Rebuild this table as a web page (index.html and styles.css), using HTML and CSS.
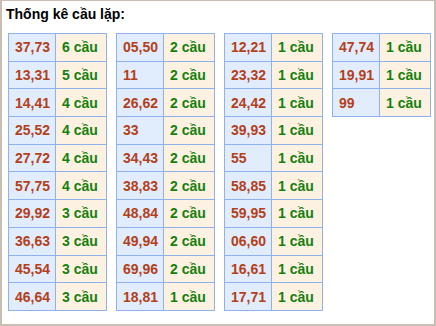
FILE: index.html
```html
<!DOCTYPE html>
<html>
<head>
<meta charset="utf-8">
<link rel="stylesheet" href="styles.css">
</head>
<body>
<div class="box">
  <div class="title">Thống kê cầu lặp:</div>
  <div class="tables">
    <table class="t">
      <tr><td class="n">37,73</td><td class="c">6 cầu</td></tr>
      <tr><td class="n">13,31</td><td class="c">5 cầu</td></tr>
      <tr><td class="n">14,41</td><td class="c">4 cầu</td></tr>
      <tr><td class="n">25,52</td><td class="c">4 cầu</td></tr>
      <tr><td class="n">27,72</td><td class="c">4 cầu</td></tr>
      <tr><td class="n">57,75</td><td class="c">4 cầu</td></tr>
      <tr><td class="n">29,92</td><td class="c">3 cầu</td></tr>
      <tr><td class="n">36,63</td><td class="c">3 cầu</td></tr>
      <tr><td class="n">45,54</td><td class="c">3 cầu</td></tr>
      <tr><td class="n">46,64</td><td class="c">3 cầu</td></tr>
    </table>
    <table class="t">
      <tr><td class="n">05,50</td><td class="c">2 cầu</td></tr>
      <tr><td class="n">11</td><td class="c">2 cầu</td></tr>
      <tr><td class="n">26,62</td><td class="c">2 cầu</td></tr>
      <tr><td class="n">33</td><td class="c">2 cầu</td></tr>
      <tr><td class="n">34,43</td><td class="c">2 cầu</td></tr>
      <tr><td class="n">38,83</td><td class="c">2 cầu</td></tr>
      <tr><td class="n">48,84</td><td class="c">2 cầu</td></tr>
      <tr><td class="n">49,94</td><td class="c">2 cầu</td></tr>
      <tr><td class="n">69,96</td><td class="c">2 cầu</td></tr>
      <tr><td class="n">18,81</td><td class="c">1 cầu</td></tr>
    </table>
    <table class="t">
      <tr><td class="n">12,21</td><td class="c">1 cầu</td></tr>
      <tr><td class="n">23,32</td><td class="c">1 cầu</td></tr>
      <tr><td class="n">24,42</td><td class="c">1 cầu</td></tr>
      <tr><td class="n">39,93</td><td class="c">1 cầu</td></tr>
      <tr><td class="n">55</td><td class="c">1 cầu</td></tr>
      <tr><td class="n">58,85</td><td class="c">1 cầu</td></tr>
      <tr><td class="n">59,95</td><td class="c">1 cầu</td></tr>
      <tr><td class="n">06,60</td><td class="c">1 cầu</td></tr>
      <tr><td class="n">16,61</td><td class="c">1 cầu</td></tr>
      <tr><td class="n">17,71</td><td class="c">1 cầu</td></tr>
    </table>
    <table class="t">
      <tr><td class="n">47,74</td><td class="c">1 cầu</td></tr>
      <tr><td class="n">19,91</td><td class="c">1 cầu</td></tr>
      <tr><td class="n">99</td><td class="c">1 cầu</td></tr>
    </table>
  </div>
</div>
</body>
</html>
```
FILE: styles.css
```css
html, body { margin: 0; padding: 0; background: #fff; }
.box {
  box-sizing: border-box;
  width: 436px;
  height: 326px;
  border: 2px solid #c8beb3;
  border-top-width: 1px;
  font-family: "Liberation Sans", Arial, sans-serif;
  padding: 5px 0 0 6px;
}
.title {
  font-size: 14px;
  font-weight: bold;
  color: #000;
  line-height: 17px;
  margin-left: -2px;
}
.tables {
  display: flex;
  align-items: flex-start;
  gap: 9px;
  margin-top: 10px;
}
.t {
  border-collapse: collapse;
  width: 98px;
  table-layout: fixed;
}
.t td {
  border: 1px solid #8fb1ee;
  height: 27.7px;
  padding: 0 0 0 6px;
  font-size: 14px;
  font-weight: bold;
  box-sizing: border-box;
}
.n { width: 47px; background: #e1edfd; color: #b3401a; }
.c { width: 51px; background: #fdf2e1; color: #16800f; }
```
